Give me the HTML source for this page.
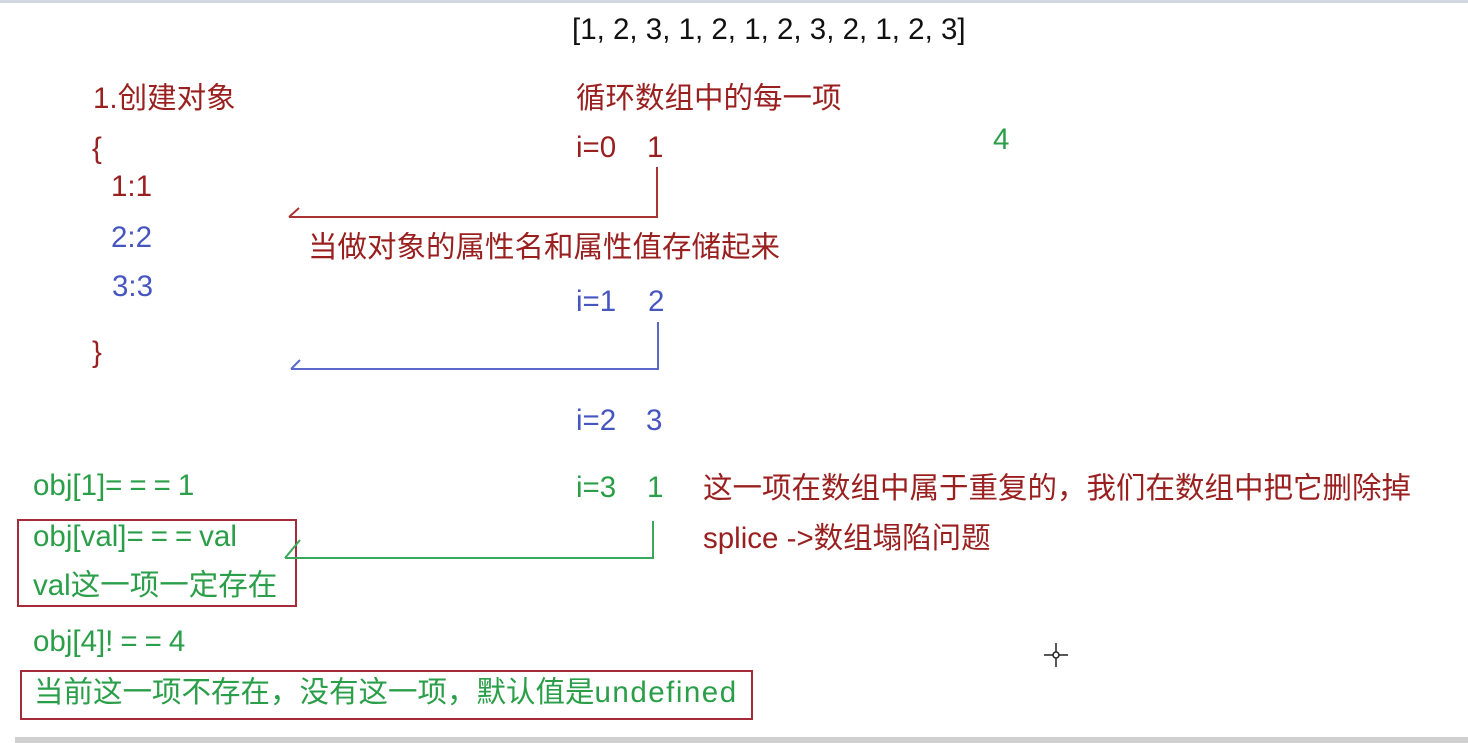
<!DOCTYPE html>
<html><head><meta charset="utf-8"><style>
html,body{margin:0;padding:0}
body{width:1468px;height:743px;background:#fff;position:relative;overflow:hidden;font-family:"Liberation Sans","Noto Sans CJK SC",sans-serif;font-size:29.5px}
.t{position:absolute;white-space:nowrap;line-height:30px}
.r{color:#9a1f1f}.b{color:#4656c0}.g{color:#2a9e48}.k{color:#111}
.box{position:absolute;border:2px solid #a52a3a}
.e{letter-spacing:7px}
</style></head><body>
<div style="position:absolute;left:0;top:0;width:1468px;height:3px;background:#d4d8e2"></div>
<div style="position:absolute;left:15px;top:737px;width:1453px;height:6px;background:#d0d0d0"></div>
<div class="t k" style="left:572px;top:15px">[1, 2, 3, 1, 2, 1, 2, 3, 2, 1, 2, 3]</div>
<div class="t r" style="left:93px;top:84px">1.创建对象</div>
<div class="t r" style="left:576px;top:84px">循环数组中的每一项</div>
<div class="t r" style="left:92px;top:134px">{</div>
<div class="t r" style="left:576px;top:133px">i=0</div><div class="t r" style="left:647px;top:133px">1</div>
<div class="t g" style="left:993px;top:125px">4</div>
<div class="t r" style="left:111px;top:172px">1:1</div>
<div class="t b" style="left:111px;top:223px">2:2</div>
<div class="t r" style="left:308px;top:233px">当做对象的属性名和属性值存储起来</div>
<div class="t b" style="left:112px;top:272px">3:3</div>
<div class="t b" style="left:576px;top:287px">i=1</div><div class="t b" style="left:648px;top:287px">2</div>
<div class="t r" style="left:92px;top:338px">}</div>
<div class="t b" style="left:576px;top:406px">i=2</div><div class="t b" style="left:646px;top:406px">3</div>
<div class="t g" style="left:33px;top:471px">obj[1]<span class="e">===</span>1</div>
<div class="t g" style="left:576px;top:473px">i=3</div><div class="t g" style="left:647px;top:473px">1</div>
<div class="t r" style="left:703px;top:474px">这一项在数组中属于重复的，我们在数组中把它删除掉</div>
<div class="t g" style="left:33px;top:522px">obj[val]<span class="e">===</span>val</div>
<div class="t r" style="left:703px;top:524px">splice -&gt;数组塌陷问题</div>
<div class="t g" style="left:33px;top:571px">val这一项一定存在</div>
<div class="t g" style="left:33px;top:627px">obj[4]<span class="e">!==</span>4</div>
<div class="t g" style="left:34px;top:678px">当前这一项不存在，没有这一项，默认值是<span style="letter-spacing:1.5px">undefined</span></div>
<div class="box" style="left:17px;top:519px;width:276px;height:84px"></div>
<div class="box" style="left:20px;top:670px;width:729px;height:46px"></div>
<svg style="position:absolute;left:0;top:0" width="1468" height="743">
<g fill="none" stroke-width="2">
<path d="M657 167V217H289M289 217L299 208" stroke="#a33"/>
<path d="M658 322V369H291M291 369L300 360" stroke="#5a68c8"/>
<path d="M653 521V558H285M285 558L300 540" stroke="#3aa85a"/>
</g>
<g stroke="#222" stroke-width="1.5" fill="none"><path d="M1056 643V667M1044 655H1068"/><circle cx="1056" cy="655" r="3" fill="#fff"/></g>
</svg>
</body></html>
